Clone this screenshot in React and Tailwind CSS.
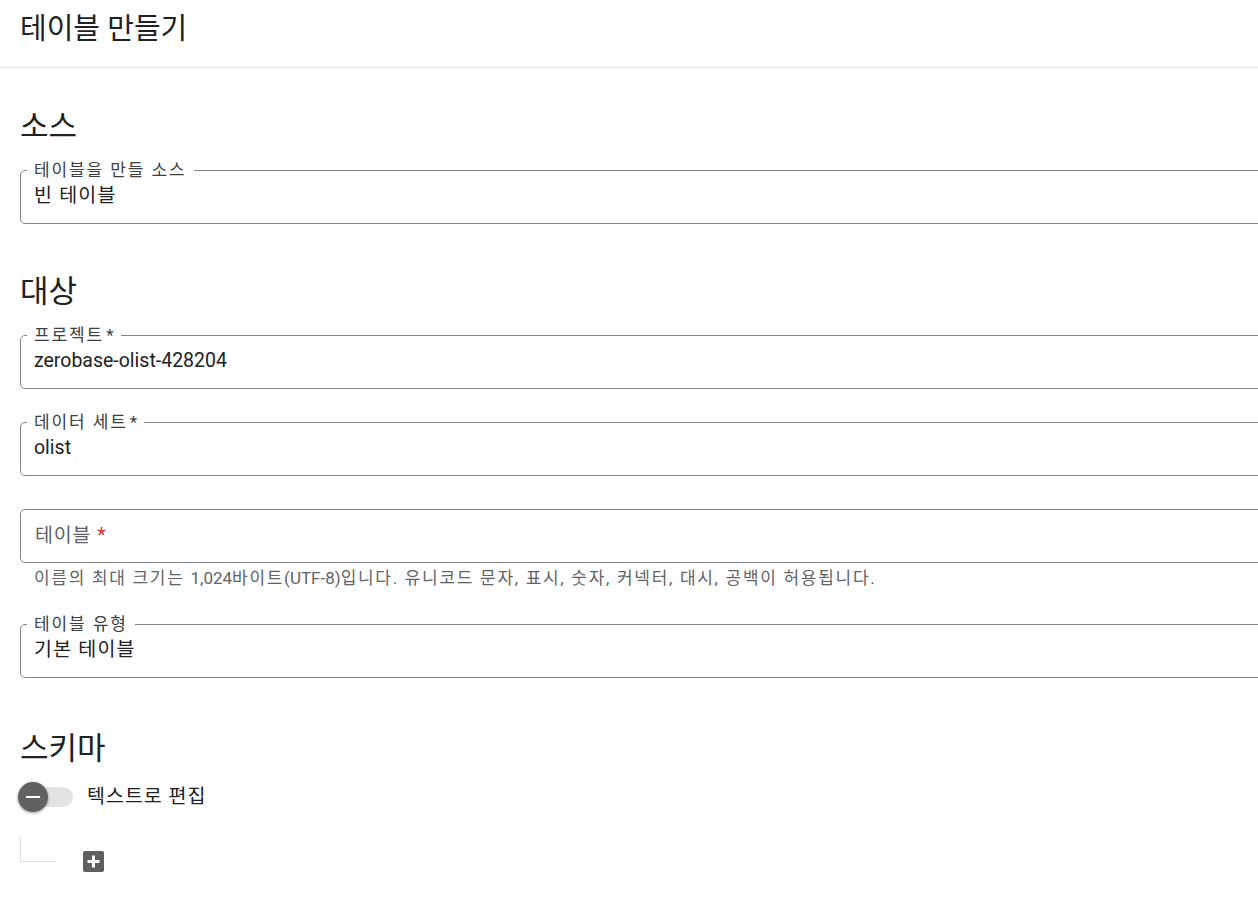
import React from "react";

const Outlined = ({ label, value, required, latin }) => (
  <fieldset className="w-[1290px] border border-[#80868b] rounded-[5px] pl-[6px] pb-[14px] pt-0">
    <legend className="px-[7px] text-[17px] leading-[16px] tracking-[1.9px] text-[#3c4043]">
      {label}
      {required && <span className="ml-[2px] tracking-normal">*</span>}
    </legend>
    <div
      className={`pl-[7px] pt-[5px] text-[19.5px] leading-[26px] text-[#202124] ${latin ? "" : "tracking-[1.2px]"}`}
    >
      {value}
    </div>
  </fieldset>
);

const Heading = ({ children }) => (
  <h2 className="text-[31px] leading-[36px] text-[#202124]">{children}</h2>
);

export default function App() {
  return (
    <div className="w-[1258px] h-[913px] overflow-hidden bg-white text-[#202124] font-[Roboto,'Noto_Sans_CJK_KR',sans-serif]">
      {/* 상단 제목 */}
      <header className="h-[68px] border-b border-[#e0e0e0] pl-5 pt-[11px]">
        <h1 className="text-[29px] leading-[36px]">테이블 만들기</h1>
      </header>

      <main className="pl-5 pt-[41px]">
        {/* 소스 */}
        <Heading>소스</Heading>
        <div className="mt-[17px]">
          <Outlined label="테이블을 만들 소스" value="빈 테이블" />
        </div>

        {/* 대상 */}
        <div className="mt-[50px]">
          <Heading>대상</Heading>
        </div>
        <div className="mt-[17px] flex flex-col gap-[25px]">
          <Outlined label="프로젝트" required latin value="zerobase-olist-428204" />
          <Outlined label="데이터 세트" required latin value="olist" />
          <div className="pt-[8px]">
            <div className="w-[1290px] h-[54px] border border-[#80868b] rounded-[5px] flex items-center pl-[14px] text-[19.5px] tracking-[0.8px] text-[#5f6368]">
              테이블<span className="ml-[6px] text-[#d93025]">*</span>
            </div>
            <p className="mt-[5px] pl-[14px] text-[17px] leading-[20px] tracking-[1.7px] text-[#5f6368]">
              이름의 최대 크기는 <span className="tracking-normal">1,024</span>바이트
              <span className="tracking-normal">(UTF-8)</span>입니다. 유니코드 문자, 표시, 숫자, 커넥터, 대시, 공백이 허용됩니다.
            </p>
          </div>
        </div>
        <div className="mt-[28px]">
          <Outlined label="테이블 유형" value="기본 테이블" />
        </div>

        {/* 스키마 */}
        <div className="mt-[53px]">
          <Heading>스키마</Heading>
        </div>
        <div className="mt-[12px] h-[36px] flex items-center">
          <div className="relative w-[53px] h-[20px]">
            <div className="absolute left-[4px] right-0 top-0 h-[20px] rounded-full bg-[#e3e3e3]" />
            <div className="absolute -left-[2px] -top-[5px] w-[30px] h-[30px] rounded-full bg-[#616161] shadow-[0_1px_3px_rgba(0,0,0,0.45)] flex items-center justify-center">
              <div className="w-[14px] h-[2.5px] bg-white" />
            </div>
          </div>
          <span className="ml-[14px] text-[19.5px] tracking-[1px] text-[#202124]">텍스트로 편집</span>
        </div>
        <div className="mt-[22px] flex items-start">
          <div className="w-[36px] h-[25px] border-l border-b border-[#e0e0e0]" />
          <div className="ml-[27px] mt-[14px] w-[21px] h-[21px] rounded-[2px] bg-[#5f5f5f] flex items-center justify-center">
            <svg width="13" height="13" viewBox="0 0 13 13">
              <rect x="5" y="0.5" width="3" height="12" fill="white" />
              <rect x="0.5" y="5" width="12" height="3" fill="white" />
            </svg>
          </div>
        </div>
      </main>
    </div>
  );
}
